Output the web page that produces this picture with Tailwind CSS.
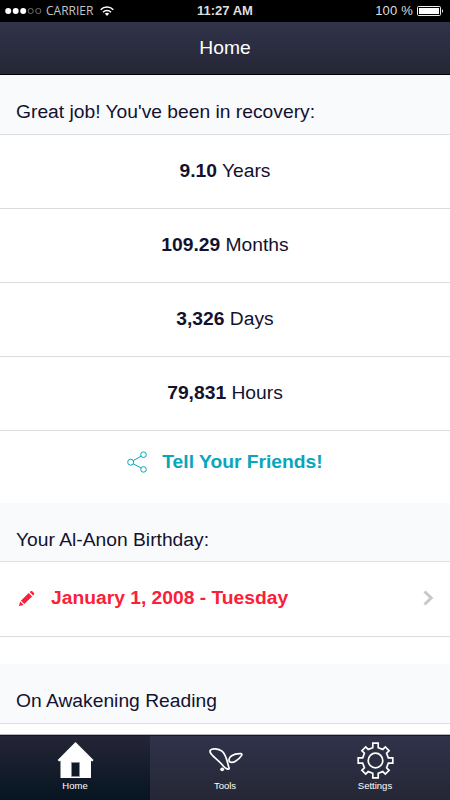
<!DOCTYPE html>
<html lang="en">
<head>
  <meta charset="UTF-8">
  <meta name="viewport" content="width=device-width, initial-scale=1">
  <title>Home</title>
  <script src="https://cdn.jsdelivr.net/npm/@tailwindcss/browser@4"></script>
</head>
<body class="bg-white">
  <div class="flex h-[800px] w-[450px] flex-col overflow-hidden font-['Liberation_Sans',sans-serif] text-[19.25px] leading-6 text-[#12122f]">
    <!-- Status bar -->
    <div class="grid h-[22px] shrink-0 grid-cols-3 items-center bg-black text-[#dedede]">
      <div class="flex items-center pl-[5px]">
        <svg class="h-[8px] w-[38px]" viewBox="0 0 38 8" fill="#fff">
          <circle cx="3.2" cy="4" r="3"/>
          <circle cx="10.7" cy="4" r="3"/>
          <circle cx="18.2" cy="4" r="3"/>
          <circle cx="25.7" cy="4" r="2.6" fill="none" stroke="#999" stroke-width=".7"/>
          <circle cx="33.3" cy="4" r="2.6" fill="none" stroke="#999" stroke-width=".7"/>
        </svg>
        <span class="ml-[3px] font-['Open_Sans',sans-serif] text-[12px] leading-5 text-[#c4c4c4]">CARRIER</span>
        <svg class="ml-[7px] h-[10px] w-[14px]" viewBox="0 0 14 10" fill="none" stroke="#fff" stroke-width="1.6">
          <path d="M.7 3.7C4.2.1 9.8.1 13.3 3.7"/>
          <path d="M3 6.2c2.2-2.2 5.8-2.2 8 0"/>
          <path d="M4.8 7.6c1.3-1 3.1-1 4.4 0L7 10Z" fill="#fff" stroke="none"/>
        </svg>
      </div>
      <div class="text-center text-[13px] leading-5 font-bold">11:27 AM</div>
      <div class="flex items-center justify-end pr-[6px]">
        <span class="text-[13px] leading-5 tracking-[0.2px]">100 %</span>
        <svg class="ml-[4px] h-[10px] w-[27px]" viewBox="0 0 27 10">
          <rect x=".5" y=".5" width="23" height="9" rx="1" fill="none" stroke="#eee"/>
          <rect x="2" y="2" width="20" height="6" fill="#fff"/>
          <path d="M25 3q2 2 0 4Z" fill="#fff"/>
        </svg>
      </div>
    </div>

    <!-- Title bar -->
    <div class="flex h-[53px] shrink-0 items-center justify-center border-b border-black bg-linear-to-b from-[#30334a] to-[#252736] text-white">Home</div>

    <!-- Content -->
    <main class="min-h-0 flex-1 overflow-hidden">
      <h2 class="h-[60px] border-b border-[#dcdde0] bg-[#f9fafc] px-4 pt-[25px]">Great job! You've been in recovery:</h2>
      <div class="flex h-[74px] items-center justify-center border-b border-[#dcdcdf] pb-px whitespace-pre"><b>9.10</b> Years</div>
      <div class="flex h-[74px] items-center justify-center border-b border-[#dcdcdf] pb-px whitespace-pre"><b>109.29</b> Months</div>
      <div class="flex h-[74px] items-center justify-center border-b border-[#dcdcdf] pb-px whitespace-pre"><b>3,326</b> Days</div>
      <div class="flex h-[74px] items-center justify-center border-b border-[#dcdcdf] pb-px whitespace-pre"><b>79,831</b> Hours</div>
      <a class="flex h-[72px] items-start justify-center pt-[19px] font-bold text-[#08a6bb]">
        <svg class="mr-[14px] h-[24px] w-[21px]" viewBox="0 0 21 24" fill="none" stroke="currentColor" stroke-width="1">
          <circle cx="3.7" cy="12.2" r="3"/>
          <circle cx="16.5" cy="4.7" r="2.8"/>
          <circle cx="16.5" cy="19.4" r="2.8"/>
          <path d="M6.3 10.7l7.8-4.6M6.3 13.8l7.8 4.2"/>
        </svg>
        Tell Your Friends!
      </a>

      <h2 class="h-[59px] border-b border-[#dfe2e6] bg-[#f9fafc] px-4 pt-[25px]">Your Al-Anon Birthday:</h2>
      <div class="flex h-[75px] items-center border-b border-[#dcdcdf] pr-[16px] pb-[2px] pl-[18px] font-bold text-[#fb2038]">
        <svg class="h-[17px] w-[17px]" viewBox="0 0 17 17" fill="currentColor">
          <path d="M1 16l1.1-4.5 3.5 3.5ZM2.9 10.7L10.7 3l3.4 3.4-7.8 7.7ZM11.7 2.1l.8-.8q.9-.8 1.8 0l1.7 1.7q.7.9 0 1.6l-.9.9Z"/>
        </svg>
        <span class="ml-[16px] flex-1">January 1, 2008 - Tuesday</span>
        <svg class="h-[16px] w-[11px]" viewBox="0 0 11 16" fill="none" stroke="#c8c8ca" stroke-width="3">
          <path d="M1.5 1.5L8.2 8l-6.7 6.5"/>
        </svg>
      </div>

      <h2 class="mt-[27px] h-[60px] border-b border-[#dcdde0] bg-[#f9fafc] px-4 pt-[25px]">On Awakening Reading</h2>
    </main>

    <!-- Tab bar -->
    <nav class="grid h-[66px] shrink-0 grid-cols-3 border-t border-[#b5b5bb] bg-linear-to-b from-[#30334a] to-[#252736] text-[9.5px] leading-3 text-white">
      <a class="flex flex-col items-center border-t border-[#101522] bg-linear-to-b from-[#242536] to-[#061521] pt-[6px]">
        <svg class="h-[37px] w-[37px]" viewBox="0 0 37 37">
          <path d="M18.5 0L36.5 18l-1 1.5-1.5-.8V36H3.500V18.700l-1.500.8L.7 18Z" fill="#fff"/>
          <path d="M14.500 20.500h8v14h-8Z" fill="#101927" stroke="#8d9199" stroke-width=".8"/>
        </svg>
        <span class="mt-px">Home</span>
      </a>
      <a class="flex flex-col items-center border-t border-[#10143a] pt-[6px]">
        <svg class="h-[37px] w-[37px]" viewBox="0 0 37 37" fill="none" stroke="#fff" stroke-width="1.7" stroke-linejoin="round">
          <path d="M3.3 8.2C5 6.2 11.500 6.500 15 9.200 19.600 13 20 20 22.200 26.500 22 28.300 18.500 26.500 16.500 24.200 13 19.800 9 16.700 6 14 4 12 2.300 9.800 3.300 8.200Z"/>
          <path d="M22.300 19.500C20.500 15 26.500 11.300 34 11.700c1 .1 1 .9.6 1.700C31.500 18.500 25.500 22 22.300 19.500Z"/>
          <circle cx="15.200" cy="27.300" r="1.900" fill="#fff" stroke="none"/>
        </svg>
        <span class="mt-px">Tools</span>
      </a>
      <a class="flex flex-col items-center border-t border-[#10143a] pt-[6px]">
        <svg class="h-[37px] w-[37px]" viewBox="-18.5 -18.5 37 37" fill="none" stroke="#fff" stroke-width="1.7">
          <path d="M-2.700-12.800V-17.300H2.700V-12.800L7.300-11.100 9.800-13.600 13.600-9.800 11.100-7.300 12.800-2.700H17.300V2.700H12.800L11.100 7.300 13.600 9.800 9.800 13.600 7.300 11.100 2.700 12.800V17.300H-2.700V12.800L-7.300 11.100-9.800 13.600-13.600 9.800-11.100 7.300-12.800 2.700H-17.300V-2.700H-12.800L-11.100-7.300-13.600-9.800-9.800-13.600-7.300-11.100Z"/>
          <circle r="7.300"/>
        </svg>
        <span class="mt-px">Settings</span>
      </a>
    </nav>
  </div>
</body>
</html>
